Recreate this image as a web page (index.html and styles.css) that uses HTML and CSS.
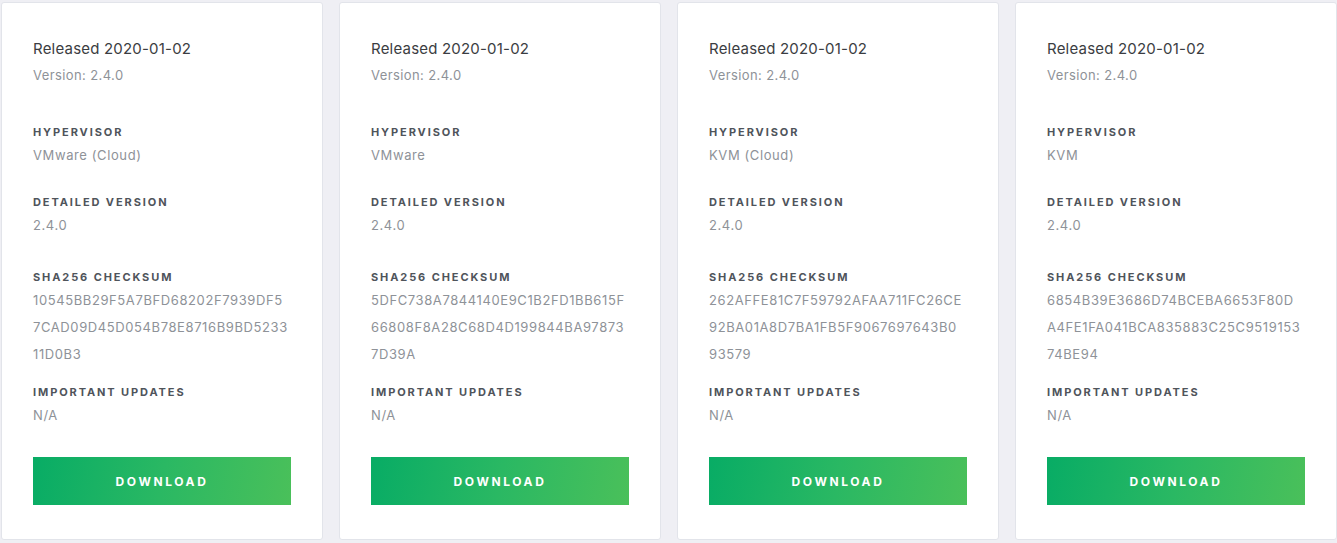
FILE: index.html
```html
<!DOCTYPE html>
<html lang="en">
<head>
<meta charset="utf-8">
<title>Releases</title>
<link rel="stylesheet" href="styles.css">
</head>
<body>
<div class="cards">
  <div class="card">
    <div class="title">Released 2020-01-02</div>
    <div class="version">Version: 2.4.0</div>
    <div class="group g1"><div class="label">HYPERVISOR</div><div class="value">VMware (Cloud)</div></div>
    <div class="group g2"><div class="label">DETAILED VERSION</div><div class="value">2.4.0</div></div>
    <div class="group g3"><div class="label">SHA256 CHECKSUM</div><div class="value">10545BB29F5A7BFD68202F7939DF5<br>7CAD09D45D054B78E8716B9BD5233<br>11D0B3</div></div>
    <div class="group g4"><div class="label">IMPORTANT UPDATES</div><div class="value">N/A</div></div>
    <a class="btn" href="#">DOWNLOAD</a>
  </div>
  <div class="card">
    <div class="title">Released 2020-01-02</div>
    <div class="version">Version: 2.4.0</div>
    <div class="group g1"><div class="label">HYPERVISOR</div><div class="value">VMware</div></div>
    <div class="group g2"><div class="label">DETAILED VERSION</div><div class="value">2.4.0</div></div>
    <div class="group g3"><div class="label">SHA256 CHECKSUM</div><div class="value">5DFC738A7844140E9C1B2FD1BB615F<br>66808F8A28C68D4D199844BA97873<br>7D39A</div></div>
    <div class="group g4"><div class="label">IMPORTANT UPDATES</div><div class="value">N/A</div></div>
    <a class="btn" href="#">DOWNLOAD</a>
  </div>
  <div class="card">
    <div class="title">Released 2020-01-02</div>
    <div class="version">Version: 2.4.0</div>
    <div class="group g1"><div class="label">HYPERVISOR</div><div class="value">KVM (Cloud)</div></div>
    <div class="group g2"><div class="label">DETAILED VERSION</div><div class="value">2.4.0</div></div>
    <div class="group g3"><div class="label">SHA256 CHECKSUM</div><div class="value">262AFFE81C7F59792AFAA711FC26CE<br>92BA01A8D7BA1FB5F9067697643B0<br>93579</div></div>
    <div class="group g4"><div class="label">IMPORTANT UPDATES</div><div class="value">N/A</div></div>
    <a class="btn" href="#">DOWNLOAD</a>
  </div>
  <div class="card">
    <div class="title">Released 2020-01-02</div>
    <div class="version">Version: 2.4.0</div>
    <div class="group g1"><div class="label">HYPERVISOR</div><div class="value">KVM</div></div>
    <div class="group g2"><div class="label">DETAILED VERSION</div><div class="value">2.4.0</div></div>
    <div class="group g3"><div class="label">SHA256 CHECKSUM</div><div class="value">6854B39E3686D74BCEBA6653F80D<br>A4FE1FA041BCA835883C25C9519153<br>74BE94</div></div>
    <div class="group g4"><div class="label">IMPORTANT UPDATES</div><div class="value">N/A</div></div>
    <a class="btn" href="#">DOWNLOAD</a>
  </div>
</div>
</body>
</html>
```

FILE: styles.css
```css
html, body {
  margin: 0;
  padding: 0;
}
body {
  background: #efeff4;
  font-family: Inter, "Open Sans", sans-serif;
  -webkit-font-smoothing: antialiased;
}
.cards {
  display: flex;
  gap: 16px;
  padding: 2px 1px 0 1px;
}
.card {
  box-sizing: border-box;
  width: 322px;
  flex: 0 0 322px;
  background: #ffffff;
  border: 1px solid #e2e4ea;
  border-radius: 3px;
  padding: 36px 31px 34px;
  display: flex;
  flex-direction: column;
}
.title {
  font-size: 15px;
  line-height: 20px;
  color: #3b3d42;
  letter-spacing: 0.2px;
}
.version {
  font-size: 13px;
  line-height: 20px;
  color: #8e9298;
  margin-top: 6px;
  letter-spacing: 0.4px;
}
.label {
  font-size: 11px;
  line-height: 16px;
  font-weight: 700;
  letter-spacing: 1.9px;
  color: #4f545b;
  margin-bottom: 2px;
}
.value {
  font-size: 13px;
  line-height: 27px;
  color: #8e9298;
  letter-spacing: 0.6px;
}
.g1 { margin-top: 39px; }
.g2 { margin-top: 25px; }
.g3 { margin-top: 30px; }
.g4 { margin-top: 16px; }
.btn {
  display: flex;
  align-items: center;
  justify-content: center;
  height: 48px;
  margin-top: 28px;
  background: linear-gradient(100deg, #08ac65 0%, #2ab863 50%, #4ac05a 100%);
  color: #ffffff;
  font-size: 12px;
  font-weight: 700;
  letter-spacing: 2.6px;
  text-decoration: none;
}
```
